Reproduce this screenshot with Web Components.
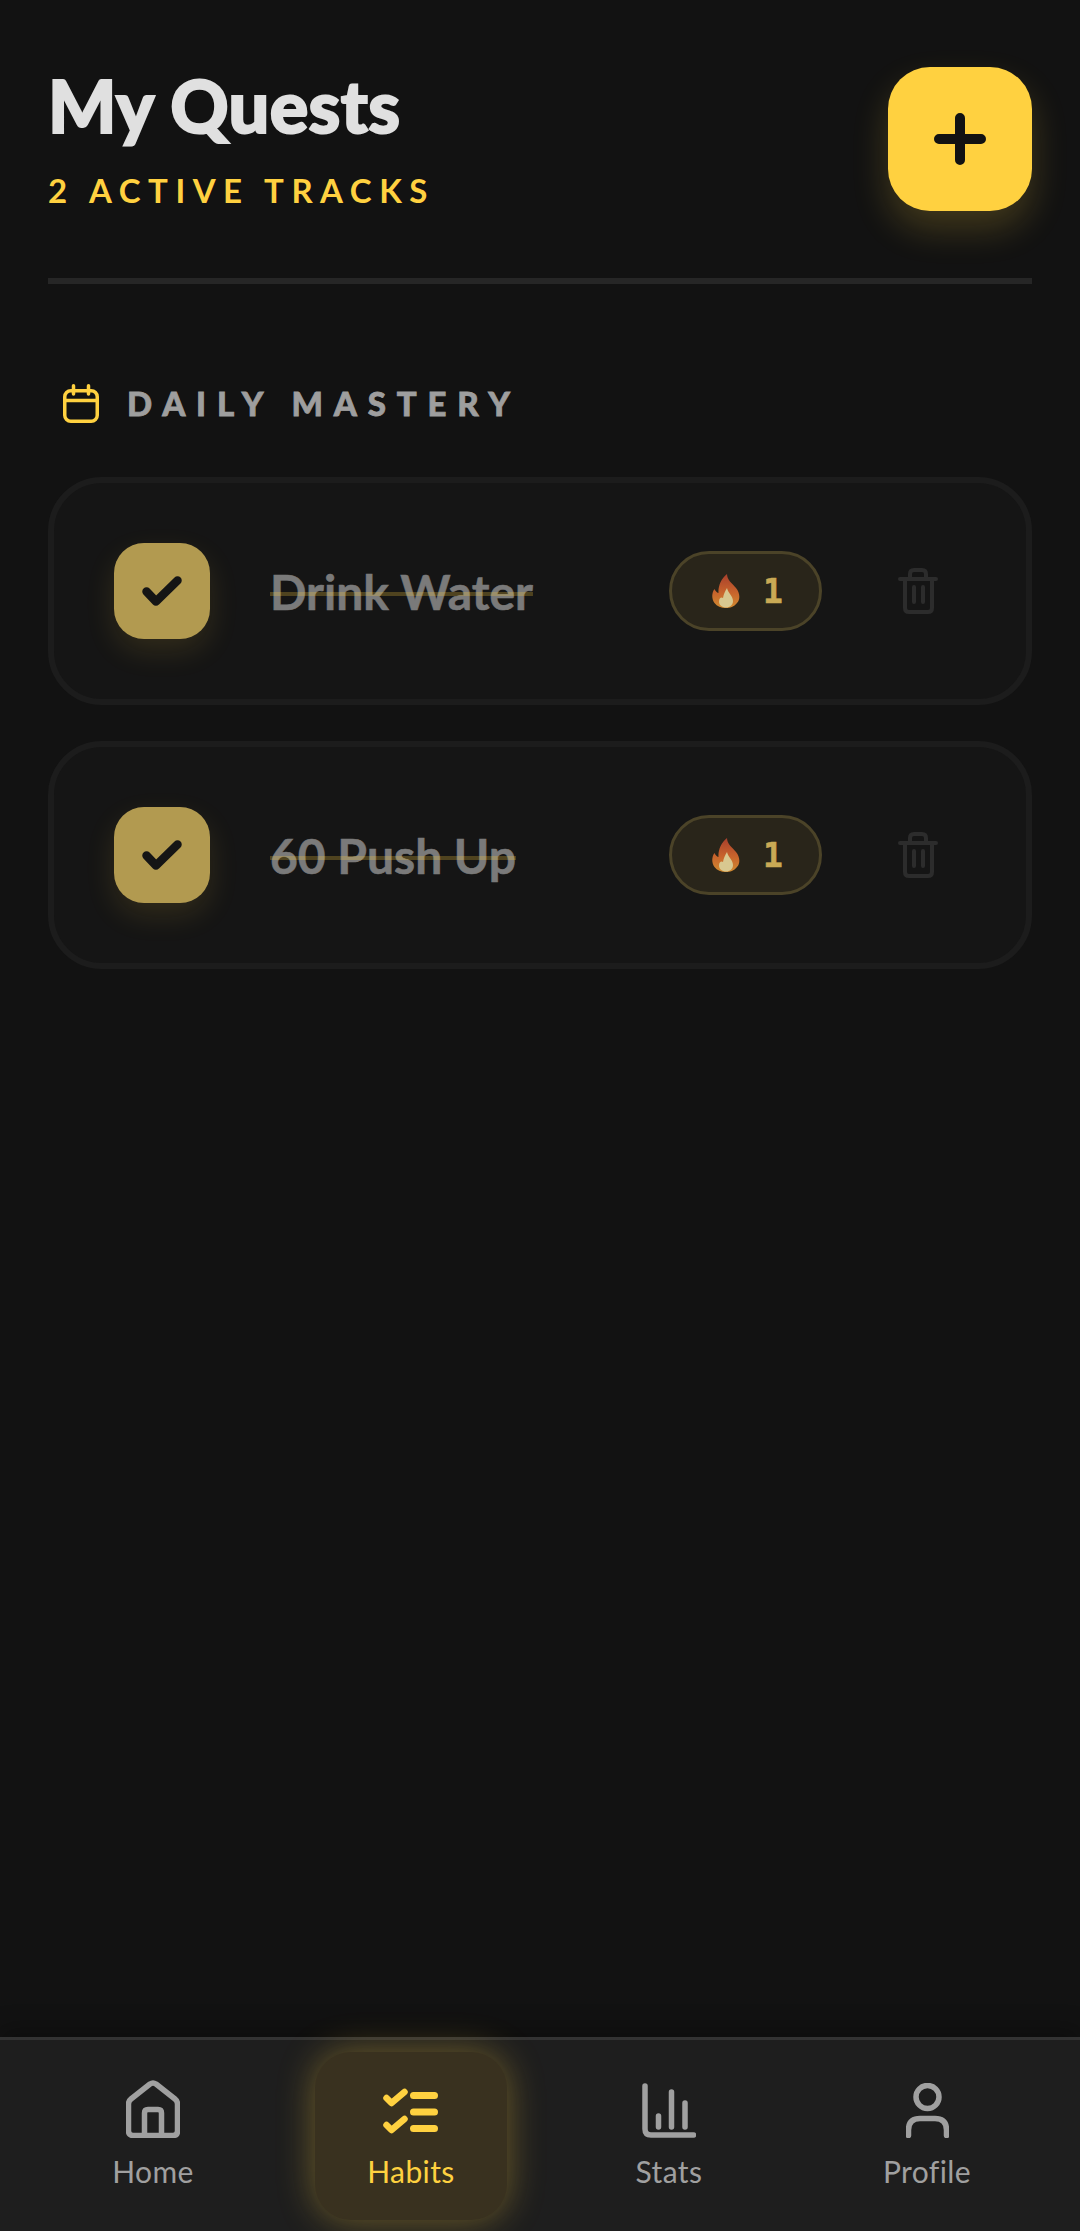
<!DOCTYPE html>
<html>
<head>
<meta charset="utf-8">
<style>
  html, body { margin: 0; height: 100%; background: #121212; }
  body { font-family: "Lato", "Noto Sans", sans-serif; }
</style>
</head>
<body>
<quest-app>
  <quest-header slot="top" count="2"></quest-header>
  <section-title>DAILY MASTERY</section-title>
  <habit-card name="Drink Water" streak="1"></habit-card>
  <habit-card name="60 Push Up" streak="1"></habit-card>
  <bottom-nav slot="nav"></bottom-nav>
</quest-app>

<script>
class QuestApp extends HTMLElement {
  constructor() {
    super();
    this.attachShadow({ mode: 'open' });
    this.shadowRoot.innerHTML = `
      <style>
        :host { display: flex; flex-direction: column; height: 2231px; background: #121212; }
        main { flex: 1; padding: 0 48px; display: flex; flex-direction: column; }
        .list { display: flex; flex-direction: column; gap: 36px; }
      </style>
      <main>
        <slot name="top"></slot>
        <div class="list"><slot></slot></div>
      </main>
      <slot name="nav"></slot>`;
  }
}
customElements.define('quest-app', QuestApp);

class QuestHeader extends HTMLElement {
  constructor() {
    super();
    this.attachShadow({ mode: 'open' });
    const count = this.getAttribute('count');
    this.shadowRoot.innerHTML = `
      <style>
        :host { display: flex; justify-content: space-between; padding-top: 67px; height: 211px; border-bottom: 6px solid #262626; }
        h1 { margin: -2px 0 0; font-size: 72px; line-height: 80px; font-weight: 900; color: #e0e0e0; -webkit-text-stroke: 2px #e0e0e0; letter-spacing: .3px; }
        p { margin: 23px 0 0; font-size: 33px; line-height: 44px; font-weight: 700; color: #ffd140; letter-spacing: 7.5px; }
        button { width: 144px; height: 144px; border: 0; padding: 0; border-radius: 42px; background: #ffd140; box-shadow: 0 18px 36px rgba(255, 209, 64, .2); display: flex; align-items: center; justify-content: center; }
      </style>
      <div>
        <h1>My Quests</h1>
        <p>${count} ACTIVE TRACKS</p>
      </div>
      <button>
        <svg width="52" height="52" viewBox="0 0 52 52" fill="none" stroke="#121212" stroke-width="10" stroke-linecap="round"><path d="M26 5V47M5 26H47"/></svg>
      </button>`;
  }
}
customElements.define('quest-header', QuestHeader);

class SectionTitle extends HTMLElement {
  constructor() {
    super();
    this.attachShadow({ mode: 'open' });
    this.shadowRoot.innerHTML = `
      <style>
        :host { display: flex; align-items: center; gap: 28px; height: 60px; margin: 89px 0 8px; padding-left: 15px; font-size: 33px; font-weight: 900; letter-spacing: 10.8px; color: #9e9e9e; -webkit-text-stroke: .8px #9e9e9e; }
        svg { flex: none; }
      </style>
      <svg width="36" height="39" viewBox="0 0 36 39" fill="none" stroke="#ffd140" stroke-width="3.500" stroke-linecap="round" stroke-linejoin="round">
        <rect x="1.750" y="6.750" width="32.500" height="30.500" rx="6"/>
        <path d="M2 16.500H34M10.500 1.750V10M25.500 1.750V10"/>
      </svg>
      <slot></slot>`;
  }
}
customElements.define('section-title', SectionTitle);

class FlameIcon extends HTMLElement {
  constructor() {
    super();
    this.attachShadow({ mode: 'open' });
    this.shadowRoot.innerHTML = `
      <style>:host { display: block; width: 28px; height: 34px; } svg { display: block; }</style>
      <svg width="28" height="34" viewBox="0 0 28 34">
        <defs>
          <linearGradient id="fire" x1="0" y1="0" x2="0" y2="1">
            <stop offset="0" stop-color="#a83f2c"/>
            <stop offset=".55" stop-color="#c8642c"/>
            <stop offset="1" stop-color="#d08a30"/>
          </linearGradient>
        </defs>
        <path fill="url(#fire)" d="M15 0C15 6 20 9 24 14C28 19 28.500 25 25 29C22 33 18 34 14 34C9 34 5 32.500 2.500 29C-.5 25 -.5 19 2.500 15C3.500 17 4.500 18.500 6.500 19C6 12 9 5 15 0Z"/>
        <path fill="#d8c890" d="M15 14C16 19 21 22 21 27C21 31 18 33.500 14 33.500C10 33.500 7 31 7 27.500C7 24 9.500 22.500 11 24C11.500 21 13 17 15 14Z"/>
      </svg>`;
  }
}
customElements.define('flame-icon', FlameIcon);

class HabitCard extends HTMLElement {
  constructor() {
    super();
    this.attachShadow({ mode: 'open' });
    this.shadowRoot.innerHTML = `
      <style>
        :host { display: flex; align-items: center; height: 228px; box-sizing: border-box; padding: 0 60px; background: #151515; border: 6px solid #1c1c1c; border-radius: 54px; }
        .check { flex: none; width: 96px; height: 96px; border-radius: 30px; background: #b29a50; box-shadow: 0 12px 30px rgba(255, 209, 64, .12); display: flex; align-items: center; justify-content: center; }
        .name { flex: 1; margin-left: 60px; font-size: 48px; font-weight: 700; color: #7a7a7a; -webkit-text-stroke: .6px #7a7a7a; text-decoration: line-through; text-decoration-color: rgba(255, 209, 64, .25); text-decoration-thickness: 4px; }
        .pill { flex: none; box-sizing: border-box; width: 153px; height: 80px; margin-right: 76px; padding-left: 40px; border: 3px solid #4b4328; border-radius: 40px; background: #29251a; display: flex; align-items: center; gap: 23px; font: 700 33px "DejaVu Sans Mono", monospace; color: #c9aa55; -webkit-text-stroke: .5px #c9aa55; }
        .trash { flex: none; display: block; margin-right: 28px; }
      </style>
      <div class="check">
        <svg width="40" height="30" viewBox="0 0 40 30" fill="none" stroke="#151515" stroke-width="8.500" stroke-linecap="round" stroke-linejoin="round"><path d="M4.500 15.500L14 25.500L35.500 4.500"/></svg>
      </div>
      <div class="name">${this.getAttribute('name')}</div>
      <div class="pill"><flame-icon></flame-icon><span>${this.getAttribute('streak')}</span></div>
      <svg class="trash" width="40" height="46" viewBox="0 0 40 46" fill="none" stroke="#2c2c2c" stroke-width="4" stroke-linecap="round" stroke-linejoin="round">
        <path d="M2 11H38M7 11V40Q7 44 11 44H30Q34 44 34 40V11M12 10V6Q12 2 16 2H24Q28 2 28 6V10M16 19V34M25 19V34"/>
      </svg>`;
  }
}
customElements.define('habit-card', HabitCard);

class NavItem extends HTMLElement {
  constructor() {
    super();
    this.attachShadow({ mode: 'open' });
    this.shadowRoot.innerHTML = `
      <style>
        :host { display: flex; flex-direction: column; align-items: center; justify-content: center; gap: 15px; width: 192px; height: 168px; box-sizing: border-box; padding-bottom: 3px; border-radius: 36px; font-size: 30px; letter-spacing: .4px; color: #a0a0a0; }
        :host([active]) { color: #ffd140; background: #39311f; box-shadow: 0 0 36px rgba(255, 209, 64, .36); }
        .icon { height: 58px; display: flex; align-items: flex-end; }
        ::slotted(svg) { display: block; }
      </style>
      <div class="icon"><slot name="icon"></slot></div>
      <slot></slot>`;
  }
}
customElements.define('nav-item', NavItem);

class BottomNav extends HTMLElement {
  constructor() {
    super();
    this.attachShadow({ mode: 'open' });
    this.shadowRoot.innerHTML = `
      <style>
        :host { display: flex; justify-content: space-around; align-items: center; height: 194px; box-sizing: border-box; padding: 0 24px; background: #1e1e1e; border-top: 3px solid #333; box-shadow: 0 -6px 24px rgba(0, 0, 0, .3); }
      </style>
      <nav-item>
        <svg slot="icon" width="54" height="58" viewBox="0 0 54 58" fill="none" stroke="currentColor" stroke-width="5.500" stroke-linejoin="round">
          <path d="M5 19L24 4Q27 2 30 4L49 19Q51.500 21 51.500 24V51Q51.500 55.500 47 55.500H7Q2.500 55.500 2.500 51V24Q2.500 21 5 19Z"/>
          <path d="M18.500 55V33Q18.500 29.500 22 29.500H32Q35.500 29.500 35.500 33V55"/>
        </svg>
        Home
      </nav-item>
      <nav-item active>
        <svg slot="icon" width="57" height="50" viewBox="0 0 57 50" fill="none" stroke="currentColor" stroke-linecap="round" stroke-linejoin="round">
          <path stroke-width="6.500" d="M3.500 10L8.500 15L21.500 4M3.500 37L8.500 42L21.500 31"/>
          <path stroke-width="7" d="M30.500 7.500H51.500M30.500 24H51.500M30.500 40.500H51.500"/>
        </svg>
        Habits
      </nav-item>
      <nav-item>
        <svg slot="icon" width="54" height="55" viewBox="0 0 54 55" fill="none" stroke="currentColor" stroke-width="5.500" stroke-linecap="round" stroke-linejoin="round">
          <path d="M3 3V46Q3 52 9 52H51.500M16.500 33V44M29.500 9V44M43 20V44"/>
        </svg>
        Stats
      </nav-item>
      <nav-item>
        <svg slot="icon" width="43" height="55" viewBox="0 0 43 55" fill="none" stroke="currentColor" stroke-width="5.500" stroke-linecap="round">
          <circle cx="21.500" cy="14" r="11.500"/>
          <path d="M2.500 52.500V47Q2.500 35.500 14 35.500H29Q40.500 35.500 40.500 47V52.500"/>
        </svg>
        Profile
      </nav-item>`;
  }
}
customElements.define('bottom-nav', BottomNav);
</script>
</body>
</html>
